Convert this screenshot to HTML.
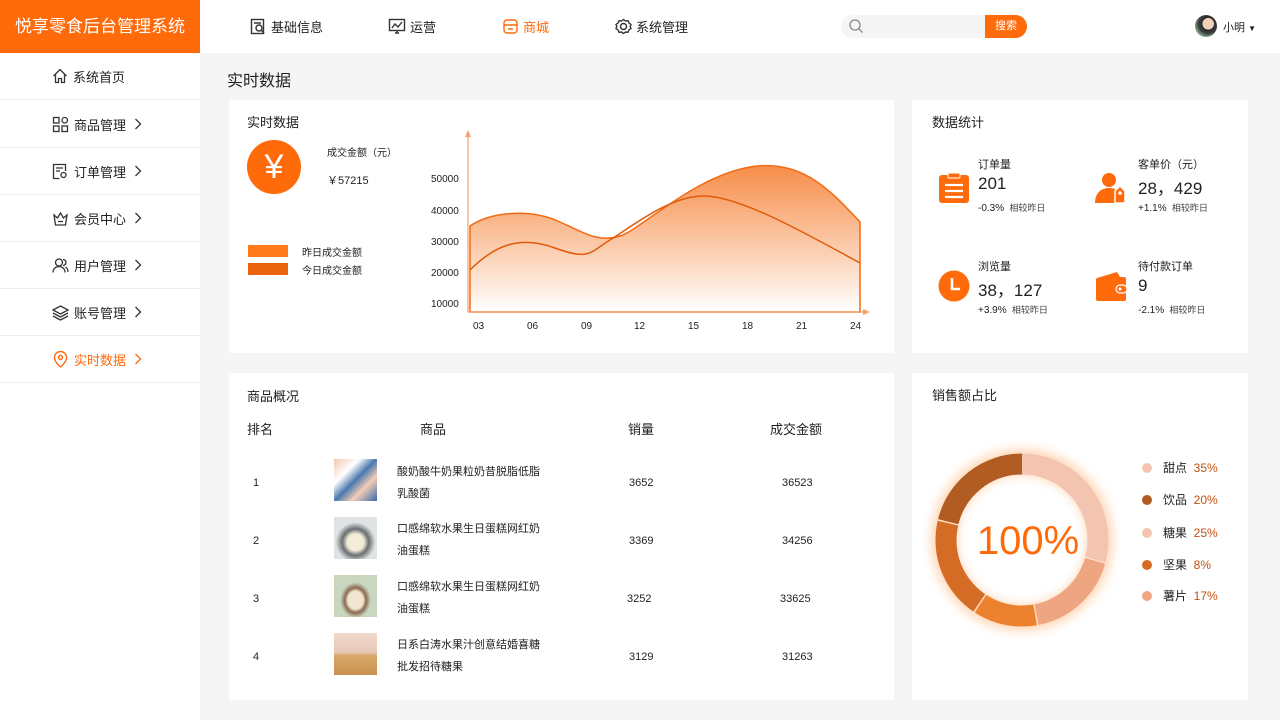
<!DOCTYPE html>
<html><head><meta charset="utf-8"><style>
*{margin:0;padding:0;box-sizing:border-box}
body{width:1280px;height:720px;overflow:hidden;background:#f5f5f5;font-family:"Liberation Sans","Noto Sans CJK SC",sans-serif;color:#222;position:relative}
.abs{position:absolute}
.top{left:0;top:0;width:1280px;height:53px;background:#fff}
.logo{left:0;top:0;width:200px;height:53px;background:#ff6a0a;color:#fff;font-size:17px;line-height:53px;text-align:center}
.nav{top:17px;font-size:13px;display:flex;align-items:center;gap:4px}
.side{left:0;top:53px;width:200px;height:667px;background:#fff}
.si{left:0;width:200px;height:47px;border-bottom:1px solid #eee;font-size:13px;display:flex;align-items:center;padding-left:52px;gap:5px}
.card{background:#fff}
.t{font-size:13px}
svg{display:block}
.ch{margin-left:3px}
</style></head><body>
<div class="abs top"></div>
<div class="abs logo">悦享零食后台管理系统</div>
<div class="abs nav" style="left:250px"><svg width="17" height="17" viewBox="0 0 17 17" fill="none" stroke="#333" stroke-width="1.4"><rect x="1.5" y="1.5" width="12" height="14"/><circle cx="9" cy="10" r="3"/><path d="M11 12l3 3M4 5h7"/></svg>基础信息</div>
<div class="abs nav" style="left:388px"><svg width="18" height="17" viewBox="0 0 18 17" fill="none" stroke="#333" stroke-width="1.4"><rect x="1.5" y="1.5" width="15" height="11"/><path d="M4 10l3-4 3 3 4-5M7 15h4M9 12v3"/></svg>运营</div>
<div class="abs nav" style="left:502px;color:#ff6a0a"><svg width="17" height="17" viewBox="0 0 17 17" fill="none" stroke="#ff6a0a" stroke-width="1.4"><rect x="2" y="2" width="13" height="13" rx="3"/><path d="M2 7h13M6 11h5"/></svg>商城</div>
<div class="abs nav" style="left:615px"><svg width="17" height="17" viewBox="0 0 17 17" fill="none" stroke="#333" stroke-width="1.4"><circle cx="8.5" cy="8.5" r="3"/><path d="M8.5 1.5l2 1.5 2.5-.3 1 2.3 2 1.5-.8 2 .8 2-2 1.5-1 2.3-2.5-.3-2 1.5-2-1.5-2.5.3-1-2.3-2-1.5.8-2-.8-2 2-1.5 1-2.3 2.5.3z"/></svg>系统管理</div>
<div class="abs" style="left:841px;top:15px;width:146px;height:23px;background:#f5f5f5;border-radius:12px 0 0 12px"></div>
<svg class="abs" style="left:848px;top:18px" width="16" height="16" viewBox="0 0 16 16" fill="none" stroke="#888" stroke-width="1.3"><circle cx="7" cy="7" r="5"/><path d="M10.5 10.5l4 4"/></svg>
<div class="abs" style="left:985px;top:15px;width:42px;height:23px;background:#ff6a0a;border-radius:0 12px 12px 0;color:#fff;font-size:11px;line-height:23px;text-align:center">搜索</div>
<div class="abs" style="left:1195px;top:15px;width:22px;height:22px;border-radius:50%;background:radial-gradient(circle at 60% 40%,#f0d0b8 30%,#2a2a2a 32%,#3b3b3b 50%,#7a9a80 70%)"></div>
<div class="abs" style="left:1223px;top:19px;font-size:11px">小明 <span style="font-size:8px">▼</span></div>

<div class="abs side"></div>
<div class="abs si" style="top:53px"><svg width="16" height="16" viewBox="0 0 16 16" fill="none" stroke="#333" stroke-width="1.3"><path d="M1.5 8L8 1.5 14.5 8M3.5 6v8.5h3v-4h3v4h3V6"/></svg>系统首页</div>
<div class="abs si" style="top:101px"><svg width="17" height="17" viewBox="0 0 17 17" fill="none" stroke="#333" stroke-width="1.3"><rect x="1.5" y="1.5" width="5.5" height="5.5"/><rect x="10" y="1.5" width="5.5" height="5.5" rx="2.7"/><rect x="1.5" y="10" width="5.5" height="5.5"/><rect x="10" y="10" width="5.5" height="5.5"/></svg>商品管理<svg class="ch" width="8" height="12" viewBox="0 0 8 12" fill="none" stroke="#333" stroke-width="1.3"><path d="M1.5 1l5 5-5 5"/></svg></div>
<div class="abs si" style="top:148px"><svg width="17" height="17" viewBox="0 0 17 17" fill="none" stroke="#333" stroke-width="1.3"><path d="M13.5 8V1.5h-12v14h6"/><path d="M4 5h7M4 8h4"/><circle cx="11.5" cy="12" r="2.5"/></svg>订单管理<svg class="ch" width="8" height="12" viewBox="0 0 8 12" fill="none" stroke="#333" stroke-width="1.3"><path d="M1.5 1l5 5-5 5"/></svg></div>
<div class="abs si" style="top:195px"><svg width="17" height="17" viewBox="0 0 17 17" fill="none" stroke="#333" stroke-width="1.3"><path d="M2 5l3.5 3 3-5 3 5 3.5-3-1.5 10h-10z"/><path d="M6 11.5h5"/></svg>会员中心<svg class="ch" width="8" height="12" viewBox="0 0 8 12" fill="none" stroke="#333" stroke-width="1.3"><path d="M1.5 1l5 5-5 5"/></svg></div>
<div class="abs si" style="top:242px"><svg width="17" height="17" viewBox="0 0 17 17" fill="none" stroke="#333" stroke-width="1.3"><circle cx="7" cy="5.5" r="3.5"/><path d="M1 15.5c0-4 3-6 6-6s6 2 6 6M11 2.5a3 3 0 010 6M13.5 10c1.5 1 2.5 3 2.5 5"/></svg>用户管理<svg class="ch" width="8" height="12" viewBox="0 0 8 12" fill="none" stroke="#333" stroke-width="1.3"><path d="M1.5 1l5 5-5 5"/></svg></div>
<div class="abs si" style="top:289px"><svg width="17" height="17" viewBox="0 0 17 17" fill="none" stroke="#333" stroke-width="1.3"><path d="M8.5 2L16 6l-7.5 4L1 6zM1 9l7.5 4L16 9M1 12l7.5 4 7.5-4"/></svg>账号管理<svg class="ch" width="8" height="12" viewBox="0 0 8 12" fill="none" stroke="#333" stroke-width="1.3"><path d="M1.5 1l5 5-5 5"/></svg></div>
<div class="abs si" style="top:336px;color:#ff6a0a"><svg width="17" height="17" viewBox="0 0 17 17" fill="none" stroke="#ff6a0a" stroke-width="1.4"><path d="M8.5 16s-6-5-6-9.5a6 6 0 0112 0C14.5 11 8.5 16 8.5 16z"/><circle cx="8.5" cy="6.5" r="2"/></svg>实时数据<svg class="ch" width="8" height="12" viewBox="0 0 8 12" fill="none" stroke="#ff6a0a" stroke-width="1.3"><path d="M1.5 1l5 5-5 5"/></svg></div>

<div class="abs" style="left:227px;top:67px;font-size:16px">实时数据</div>

<!-- card 1 -->
<div class="abs card" style="left:229px;top:100px;width:665px;height:253px"></div>
<div class="abs t" style="left:247px;top:112px">实时数据</div>
<div class="abs" style="left:247px;top:140px;width:54px;height:54px;border-radius:50%;background:#ff6a0a;color:#fff;font-size:34px;line-height:54px;text-align:center">¥</div>
<div class="abs" style="left:327px;top:144px;font-size:10px">成交金额（元）</div>
<div class="abs" style="left:327px;top:172px;font-size:11px">￥57215</div>
<div class="abs" style="left:248px;top:245px;width:40px;height:12px;background:#ff7a1a"></div>
<div class="abs" style="left:248px;top:263px;width:40px;height:12px;background:#e8630c"></div>
<div class="abs" style="left:302px;top:244px;font-size:10px">昨日成交金额</div>
<div class="abs" style="left:302px;top:262px;font-size:10px">今日成交金额</div>
<svg class="abs" style="left:400px;top:125px" width="480" height="215" viewBox="400 125 480 215">
<defs><linearGradient id="g" x1="0" y1="0" x2="0" y2="1"><stop offset="0" stop-color="#f57a2a" stop-opacity=".85"/><stop offset="1" stop-color="#fff" stop-opacity=".9"/></linearGradient></defs>
<path d="M470 226C490 212 530 208 560 222S600 242 620 236S690 180 745 168S830 190 860 222V312H470Z" fill="url(#g)" stroke="#f26a12" stroke-width="1.5"/>
<path d="M470 270C495 245 520 235 555 248S590 252 610 240S670 195 705 196S800 230 860 263" fill="none" stroke="#e05a08" stroke-width="1.5"/>
<path d="M468 312V132M468 312H866" stroke="#f5a070" stroke-width="1.2"/>
<path d="M465 137l3-7 3 7zM863 309l7 3-7 3z" fill="#f5a070"/>
<g font-size="10" fill="#222" font-family="Liberation Sans"><text x="431" y="182">50000</text><text x="431" y="214">40000</text><text x="431" y="245">30000</text><text x="431" y="276">20000</text><text x="431" y="307">10000</text>
<text x="473" y="329">03</text><text x="527" y="329">06</text><text x="581" y="329">09</text><text x="634" y="329">12</text><text x="688" y="329">15</text><text x="742" y="329">18</text><text x="796" y="329">21</text><text x="850" y="329">24</text></g>
</svg>

<!-- card 2 -->
<div class="abs card" style="left:912px;top:100px;width:336px;height:253px"></div>
<div class="abs t" style="left:932px;top:112px">数据统计</div>
<svg class="abs" style="left:938px;top:172px" width="32" height="32" viewBox="0 0 32 32"><rect x="1" y="3" width="30" height="28" rx="3" fill="#ff6a0a"/><rect x="10" y="1" width="12" height="5" rx="1" fill="#ff6a0a" stroke="#fff" stroke-width="1"/><path d="M7 13h18M7 19h18M7 25h18" stroke="#fff" stroke-width="2.2"/></svg>
<div class="abs" style="left:978px;top:156px;font-size:11px">订单量</div>
<div class="abs" style="left:978px;top:174px;font-size:17px">201</div>
<div class="abs" style="left:978px;top:201px;font-size:10px">-0.3% <span style="font-size:9px;color:#444">&nbsp;相较昨日</span></div>
<svg class="abs" style="left:1095px;top:172px" width="32" height="32" viewBox="0 0 32 32"><circle cx="14" cy="8" r="7" fill="#ff6a0a"/><path d="M0 31c0-10 6-15 14-15s14 5 14 15z" fill="#ff6a0a"/><path d="M20 19l5-5 5 5v12h-10z" fill="#ff6a0a" stroke="#fff" stroke-width="1.5"/><circle cx="25" cy="21" r="1.8" fill="#fff"/></svg>
<div class="abs" style="left:1138px;top:156px;font-size:11px">客单价（元）</div>
<div class="abs" style="left:1138px;top:174px;font-size:17px">28，429</div>
<div class="abs" style="left:1138px;top:201px;font-size:10px">+1.1% <span style="font-size:9px;color:#444">&nbsp;相较昨日</span></div>
<svg class="abs" style="left:938px;top:270px" width="32" height="32" viewBox="0 0 32 32"><circle cx="16" cy="16" r="15.5" fill="#ff6a0a"/><path d="M14 8v11h8" stroke="#fff" stroke-width="2.5" fill="none"/></svg>
<div class="abs" style="left:978px;top:258px;font-size:11px">浏览量</div>
<div class="abs" style="left:978px;top:276px;font-size:17px">38，127</div>
<div class="abs" style="left:978px;top:303px;font-size:10px">+3.9% <span style="font-size:9px;color:#444">&nbsp;相较昨日</span></div>
<svg class="abs" style="left:1095px;top:272px" width="32" height="30" viewBox="0 0 32 30"><path d="M2 6l20-6 3 5h4a2 2 0 012 2v20a2 2 0 01-2 2H3a2 2 0 01-2-2V7z" fill="#ff6a0a"/><rect x="21" y="13" width="11" height="8" rx="4" fill="#ff6a0a" stroke="#fff" stroke-width="1.2"/><circle cx="25" cy="17" r="1.5" fill="#fff"/></svg>
<div class="abs" style="left:1138px;top:258px;font-size:11px">待付款订单</div>
<div class="abs" style="left:1138px;top:276px;font-size:17px">9</div>
<div class="abs" style="left:1138px;top:303px;font-size:10px">-2.1% <span style="font-size:9px;color:#444">&nbsp;相较昨日</span></div>

<!-- card 3 -->
<div class="abs card" style="left:229px;top:373px;width:665px;height:327px"></div>
<div class="abs t" style="left:247px;top:386px">商品概况</div>
<div class="abs t" style="left:247px;top:419px">排名</div>
<div class="abs t" style="left:420px;top:419px">商品</div>
<div class="abs t" style="left:628px;top:419px">销量</div>
<div class="abs t" style="left:770px;top:419px">成交金额</div>
<div class="abs" style="left:253px;top:477px;font-size:11px">1</div>
<div class="abs" style="left:334px;top:459px;width:43px;height:42px;background:linear-gradient(135deg,#f0c8b0,#fff 30%,#4a78b0 50%,#f3cdb5 70%,#3a6aa8)"></div>
<div class="abs" style="left:397px;top:461px;font-size:11px;line-height:22px">酸奶酸牛奶果粒奶昔脱脂低脂<br>乳酸菌</div>
<div class="abs" style="left:629px;top:477px;font-size:11px">3652</div>
<div class="abs" style="left:782px;top:477px;font-size:11px">36523</div>
<div class="abs" style="left:253px;top:535px;font-size:11px">2</div>
<div class="abs" style="left:334px;top:517px;width:43px;height:42px;background:radial-gradient(circle at 50% 60%,#f2ecd8 25%,#6a6e70 40%,#dfe3e4 60%)"></div>
<div class="abs" style="left:397px;top:518px;font-size:11px;line-height:22px">口感绵软水果生日蛋糕网红奶<br>油蛋糕</div>
<div class="abs" style="left:629px;top:535px;font-size:11px">3369</div>
<div class="abs" style="left:782px;top:535px;font-size:11px">34256</div>
<div class="abs" style="left:253px;top:593px;font-size:11px">3</div>
<div class="abs" style="left:334px;top:575px;width:43px;height:42px;background:radial-gradient(ellipse at 50% 60%,#f3e6d0 25%,#8a6a50 35%,#c9d6c0 50%)"></div>
<div class="abs" style="left:397px;top:576px;font-size:11px;line-height:22px">口感绵软水果生日蛋糕网红奶<br>油蛋糕</div>
<div class="abs" style="left:627px;top:593px;font-size:11px">3252</div>
<div class="abs" style="left:780px;top:593px;font-size:11px">33625</div>
<div class="abs" style="left:253px;top:651px;font-size:11px">4</div>
<div class="abs" style="left:334px;top:633px;width:43px;height:42px;background:linear-gradient(#f0d8cc,#e8c8b8 45%,#d8a868 55%,#c89050)"></div>
<div class="abs" style="left:397px;top:634px;font-size:11px;line-height:22px">日系白涛水果汁创意结婚喜糖<br>批发招待糖果</div>
<div class="abs" style="left:629px;top:651px;font-size:11px">3129</div>
<div class="abs" style="left:782px;top:651px;font-size:11px">31263</div>

<!-- card 4 -->
<div class="abs card" style="left:912px;top:373px;width:336px;height:327px"></div>
<div class="abs t" style="left:932px;top:385px">销售额占比</div>
<svg class="abs" style="left:922px;top:440px" width="200" height="200" viewBox="0 0 200 200">
<defs><filter id="f" x="-30%" y="-30%" width="160%" height="160%"><feGaussianBlur stdDeviation="5"/></filter></defs>
<circle cx="100" cy="100" r="78" fill="none" stroke="#ffb070" stroke-width="26" opacity=".5" filter="url(#f)"/>
<g transform="rotate(-90 100 100)" fill="none" stroke-width="21">
<circle cx="100" cy="100" r="76" stroke="#f3c4b0" stroke-dasharray="139 339"/>
<circle cx="100" cy="100" r="76" stroke="#eea582" stroke-dasharray="83.5 394" stroke-dashoffset="-140.5"/>
<circle cx="100" cy="100" r="76" stroke="#ec8130" stroke-dasharray="57 421" stroke-dashoffset="-225.5"/>
<circle cx="100" cy="100" r="76" stroke="#d46c26" stroke-dasharray="91 387" stroke-dashoffset="-284"/>
<circle cx="100" cy="100" r="76" stroke="#b05c22" stroke-dasharray="101 377" stroke-dashoffset="-376.5"/>
</g>
<text x="106" y="114" text-anchor="middle" font-size="40" fill="#ff6a0a" font-family="Liberation Sans">100%</text>
</svg>
<div class="abs" style="left:1142px;top:463px;width:10px;height:10px;border-radius:50%;background:#f3c4b0"></div>
<div class="abs" style="left:1142px;top:495px;width:10px;height:10px;border-radius:50%;background:#b05c22"></div>
<div class="abs" style="left:1142px;top:528px;width:10px;height:10px;border-radius:50%;background:#f3c4b0"></div>
<div class="abs" style="left:1142px;top:560px;width:10px;height:10px;border-radius:50%;background:#d46c26"></div>
<div class="abs" style="left:1142px;top:591px;width:10px;height:10px;border-radius:50%;background:#eea582"></div>
<div class="abs" style="left:1163px;top:460px;font-size:12px;line-height:16px">甜点 &nbsp;<span style="color:#c05010">35%</span></div>
<div class="abs" style="left:1163px;top:492px;font-size:12px;line-height:16px">饮品 &nbsp;<span style="color:#c05010">20%</span></div>
<div class="abs" style="left:1163px;top:525px;font-size:12px;line-height:16px">糖果 &nbsp;<span style="color:#c05010">25%</span></div>
<div class="abs" style="left:1163px;top:557px;font-size:12px;line-height:16px">坚果 &nbsp;<span style="color:#c05010">8%</span></div>
<div class="abs" style="left:1163px;top:588px;font-size:12px;line-height:16px">薯片 &nbsp;<span style="color:#c05010">17%</span></div>
</body></html>
